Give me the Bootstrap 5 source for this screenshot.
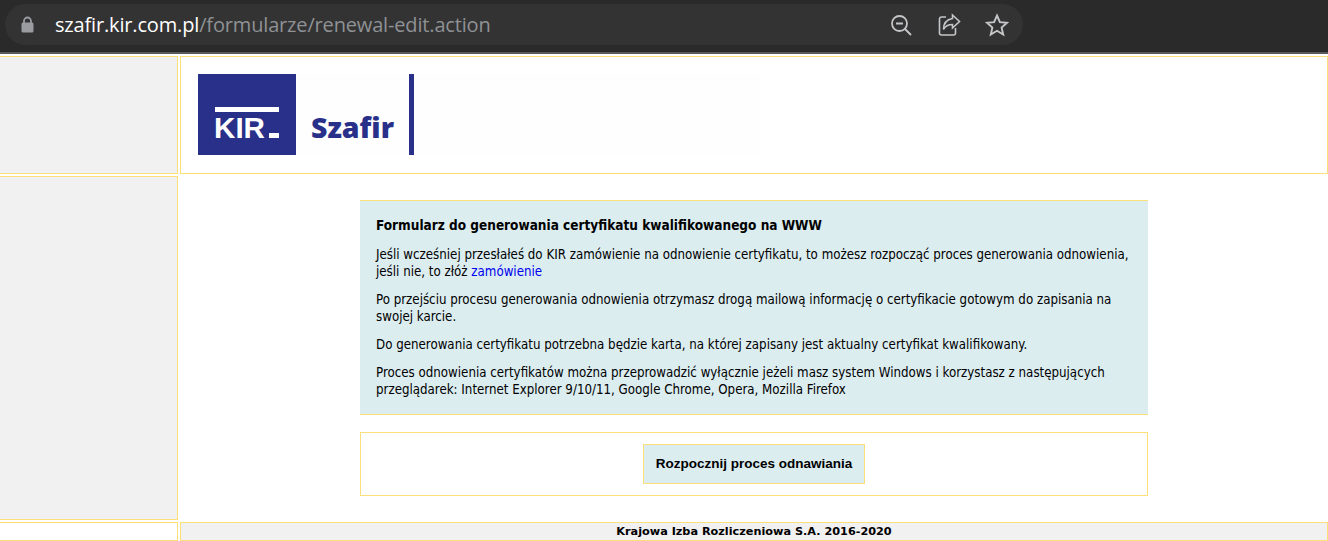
<!DOCTYPE html>
<html lang="pl">
<head>
<meta charset="utf-8">
<title>Szafir</title>
<link href="https://cdn.jsdelivr.net/npm/bootstrap@5.3.0/dist/css/bootstrap.min.css" rel="stylesheet">
<style>
html,body{height:541px;overflow:hidden;background:#fff;}
body{font-family:"DejaVu Sans Condensed","DejaVu Sans",sans-serif;font-size:13.200px;color:#000;}
.topbar{height:54px;background:#2a2a2a;border-bottom:2px solid #5a5a5a;padding:4px 0 0 5px;}
.omni{width:1018px;height:41px;background:#333334;border-radius:21px;padding:0 16px;}
.lock{width:13px;height:17px;margin-right:21px;}
.urltext{font-family:"Open Sans",sans-serif;font-size:20px;color:#8f9194;letter-spacing:-.16px;white-space:nowrap;}
.urlhost{color:#fff;}
.tool-icons{gap:24px;margin-right:-2px;}
.sheet{padding-top:2px;gap:2px;}
.rowline{gap:2px;}
.leftcell{width:178px;flex:none;background:#f1f1f1;border:1px solid #fbe07a;border-left:0;}
.leftcell-plain{background:#fff;}
.rightcell{flex:1;border:1px solid #fbe07a;}
.headrow{height:118px;}
.logobox{margin:17px 0 0 17px;width:563px;height:82px;background:#fdfefd;}
.mainrow{height:344px;}
.mainpane{flex:1;padding:24px 180px 0;}
.infobox{background:#dcedf0;border-top:1px solid #fbe07a;border-bottom:1px solid #fbe07a;padding:16px 16px 16px;line-height:17px;}
.infotitle{font-size:13.500px;font-weight:700;line-height:17px;margin:0 0 12px;}
.infobox p{margin:0 0 11px;}
.infobox p:last-child{margin:0;}
.infobox a{color:#0000ee;text-decoration:none;}
.actionbox{margin-top:17px;height:64px;border:1px solid #fbe07a;}
.startbtn{background:#dcedf0;border:1px solid #fbe07a;border-radius:0;height:40px;width:222px;padding:0;font-family:"Liberation Sans",sans-serif;font-size:13.500px;font-weight:700;color:#000;}
.footrow{height:19px;}
.footcell{flex:1;background:#f1f1f1;border:1px solid #fbe07a;font-family:"DejaVu Sans",Verdana,sans-serif;font-size:11.250px;font-weight:700;line-height:17px;text-align:center;}
</style>
</head>
<body>
<div class="topbar">
  <div class="omni d-flex align-items-center">
    <svg class="lock" viewBox="0 0 13 17"><path d="M3 7V5a3.500 3.500 0 0 1 7 0v2" fill="none" stroke="#9a9ca0" stroke-width="1.800"/><rect x="0.500" y="6.500" width="12" height="10" rx="1.500" fill="#9a9ca0"/></svg>
    <div class="urltext flex-grow-1"><span class="urlhost">szafir.kir.com.pl</span>/formularze/renewal-edit.action</div>
    <div class="tool-icons d-flex align-items-center">
      <svg width="24" height="24" viewBox="0 0 24 24" fill="none" stroke="#c4c6c8" stroke-width="1.800"><circle cx="10.500" cy="10.500" r="7.500"/><path d="M16 16l6 6M7 10.500h7"/></svg>
      <svg width="24" height="24" viewBox="0 0 24 24" fill="none" stroke="#c4c6c8" stroke-width="1.600"><path d="M9 4H4.500A2 2 0 0 0 2.500 6v14A2 2 0 0 0 4.500 22h12a2 2 0 0 0 2-2v-5"/><path d="M15.500 2l7 6.500-7 6.500v-3.500c-4 0-7 1-9 5 0-6 3-10 9-11z"/></svg>
      <svg width="24" height="24" viewBox="0 0 24 24" fill="none" stroke="#c4c6c8" stroke-width="1.900"><path d="M12 2.500l2.900 6.600 7.100.7-5.400 4.700 1.600 7-6.200-3.700-6.200 3.700 1.600-7L2 9.800l7.100-.7z"/></svg>
    </div>
  </div>
</div>
<div class="sheet d-flex flex-column">
  <div class="rowline headrow d-flex">
    <div class="leftcell"></div>
    <div class="rightcell">
      <div class="logobox">
        <svg width="220" height="82" viewBox="0 0 220 82">
          <rect x="0" y="0" width="98" height="81" fill="#29308a"/>
          <rect x="17" y="33" width="64" height="5" fill="#fff"/>
          <text x="16" y="64" font-family="Liberation Sans,sans-serif" font-size="29" font-weight="700" fill="#fff" textLength="51" lengthAdjust="spacingAndGlyphs">KIR</text>
          <rect x="71" y="59" width="10" height="5" fill="#fff"/>
          <text x="113" y="64" font-family="Open Sans,sans-serif" font-size="29" font-weight="800" fill="#29308a" textLength="83" lengthAdjust="spacingAndGlyphs">Szafir</text>
          <rect x="211" y="0" width="5" height="81" fill="#29308a"/>
        </svg>
      </div>
    </div>
  </div>
  <div class="rowline mainrow d-flex">
    <div class="leftcell"></div>
    <div class="mainpane">
      <div class="infobox">
        <div class="infotitle">Formularz do generowania certyfikatu kwalifikowanego na WWW</div>
        <p>Jeśli wcześniej przesłałeś do KIR zamówienie na odnowienie certyfikatu, to możesz rozpocząć proces generowania odnowienia, jeśli nie, to złóż <a href="#">zamówienie</a></p>
        <p>Po przejściu procesu generowania odnowienia otrzymasz drogą mailową informację o certyfikacie gotowym do zapisania na swojej karcie.</p>
        <p>Do generowania certyfikatu potrzebna będzie karta, na której zapisany jest aktualny certyfikat kwalifikowany.</p>
        <p>Proces odnowienia certyfikatów można przeprowadzić wyłącznie jeżeli masz system Windows i korzystasz z następujących przeglądarek: Internet Explorer 9/10/11, Google Chrome, Opera, Mozilla Firefox</p>
      </div>
      <div class="actionbox d-flex align-items-center justify-content-center">
        <button type="button" class="btn startbtn">Rozpocznij proces odnawiania</button>
      </div>
    </div>
  </div>
  <div class="rowline footrow d-flex">
    <div class="leftcell leftcell-plain"></div>
    <div class="footcell">Krajowa Izba Rozliczeniowa S.A. 2016-2020</div>
  </div>
</div>
<script src="https://cdn.jsdelivr.net/npm/bootstrap@5.3.0/dist/js/bootstrap.bundle.min.js"></script>
</body>
</html>
